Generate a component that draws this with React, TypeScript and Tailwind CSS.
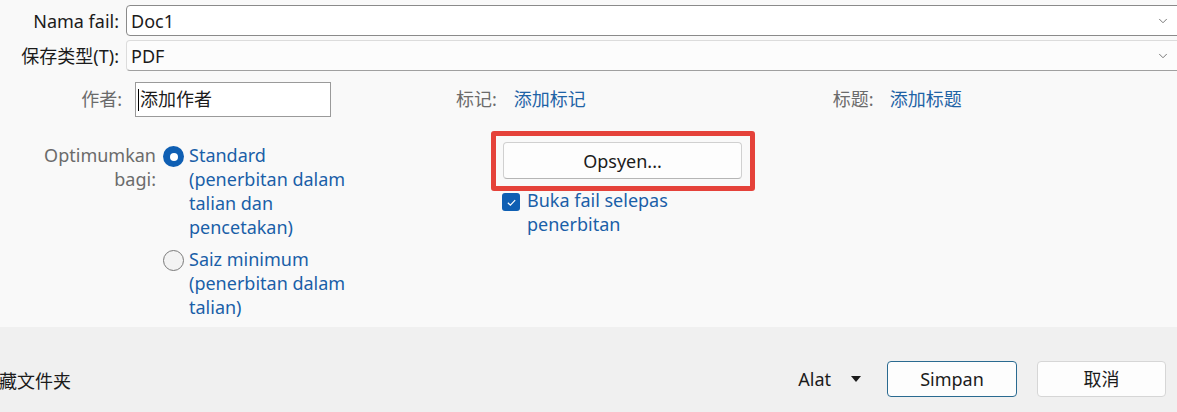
import { ChevronDown } from "lucide-react";

const font = { fontFamily: '"Noto Sans", "Noto Sans CJK SC", sans-serif' };

export default function App() {
  return (
    <div className="w-[1177px] h-[412px] overflow-hidden bg-[#f9f9f9] flex flex-col text-[18px] text-[#1b1b1b]" style={font}>
      {/* file name + type */}
      <div className="pt-[5px] flex flex-col gap-[4px]">
        <div className="flex items-center h-[31px]">
          <div className="w-[126px] pr-[7px] text-right leading-none whitespace-nowrap">Nama fail:</div>
          <div className="flex-1 h-[31px] -mr-[4px] flex items-center justify-between bg-white border border-[#8a8a8a] rounded-[4px] pl-[4px] pr-[10px]">
            <span className="leading-none">Doc1</span>
            <ChevronDown className="w-[14px] h-[14px] text-[#666]" strokeWidth={1.5} />
          </div>
        </div>
        <div className="flex items-center h-[31px]">
          <div className="w-[126px] pr-[7px] text-right leading-none whitespace-nowrap">保存类型(T):</div>
          <div className="flex-1 h-[31px] -mr-[4px] flex items-center justify-between bg-[#fcfcfc] border border-[#dcdcdc] border-b-[#a0a0a0] rounded-[4px] pl-[4px] pr-[10px]">
            <span className="leading-none">PDF</span>
            <ChevronDown className="w-[14px] h-[14px] text-[#666]" strokeWidth={1.5} />
          </div>
        </div>
      </div>

      {/* metadata row */}
      <div className="mt-[11px] flex items-center h-[35px] text-[18px]">
        <div className="w-[122px] text-right text-[#6b6b6b]">作者:</div>
        <div className="ml-[13px] w-[196px] h-[35px] bg-white border border-[#9a9a9a] flex items-center pl-[2px]">
          <span className="w-px h-[22px] bg-black mr-[1px]" />
          <span>添加作者</span>
        </div>
        <div className="ml-[125px] text-[#6b6b6b]">标记:</div>
        <div className="ml-[17px] text-[#1f63a6]">添加标记</div>
        <div className="ml-[247px] text-[#6b6b6b]">标题:</div>
        <div className="ml-[16px] text-[#1f63a6]">添加标题</div>
      </div>

      {/* optimize */}
      <div className="mt-[26px] flex leading-[24px]">
        <div className="w-[157px] text-right text-[#6b6b6b] pr-[1px]">
          Optimumkan
          <br />
          bagi:
        </div>
        <div className="ml-[6px] w-[328px] flex flex-col gap-[8px]">
          <div className="flex">
            <span className="mt-[3px] w-[21px] h-[21px] rounded-full bg-[#0f5fb3] flex items-center justify-center shrink-0">
              <span className="w-[8px] h-[8px] rounded-full bg-white" />
            </span>
            <span className="ml-[5px] text-[#1a5fa8]">
              Standard
              <br />
              (penerbitan dalam
              <br />
              talian dan
              <br />
              pencetakan)
            </span>
          </div>
          <div className="flex">
            <span className="mt-[3px] w-[21px] h-[21px] rounded-full bg-[#f3f3f3] border border-[#7a7a7a] shrink-0" />
            <span className="ml-[5px] text-[#1a5fa8]">
              Saiz minimum
              <br />
              (penerbitan dalam
              <br />
              talian)
            </span>
          </div>
        </div>
        <div className="-mt-[12px] flex flex-col">
          <div className="relative z-10 w-[264px] h-[60px] border-[5px] border-[#e5423a] rounded-[3px] pl-[7px] pt-[6px]">
            <button className="w-[239px] h-[37px] bg-[#fdfdfd] border border-[#d0d0d0] border-b-[#b5b5b5] rounded-[4px] text-[#1b1b1b]">
              Opsyen...
            </button>
          </div>
          <div className="flex ml-[11px] -mt-[3px]">
            <span className="mt-[5px] w-[18px] h-[18px] rounded-[3px] bg-[#0f5fb3] flex items-center justify-center shrink-0">
              <svg viewBox="0 0 12 12" className="w-[11px] h-[11px]" fill="none" stroke="white" strokeWidth="1.3">
                <path d="M2 6.3 L4.8 9 L10 3.4" />
              </svg>
            </span>
            <span className="ml-[7px] text-[#1a5fa8]">
              Buka fail selepas
              <br />
              penerbitan
            </span>
          </div>
        </div>
      </div>

      {/* footer */}
      <div className="mt-auto h-[85px] bg-[#f0f0f0] flex items-center pt-[19px]">
        <div className="-ml-[1px] flex-1 pt-[5px]">藏文件夹</div>
        <div className="flex items-center">
          <span>Alat</span>
          <svg viewBox="0 0 10 6" className="ml-[20px] w-[10px] h-[6px]">
            <path d="M0 0 H10 L5 6 Z" fill="#1b1b1b" />
          </svg>
          <button className="ml-[26px] w-[130px] h-[36px] bg-[#fdfdfd] border border-[#2a6a90] rounded-[4px]">
            Simpan
          </button>
          <button className="ml-[20px] mr-[11px] w-[129px] h-[36px] bg-[#fdfdfd] border border-[#d6d6d6] rounded-[4px]">
            取消
          </button>
        </div>
      </div>
    </div>
  );
}
